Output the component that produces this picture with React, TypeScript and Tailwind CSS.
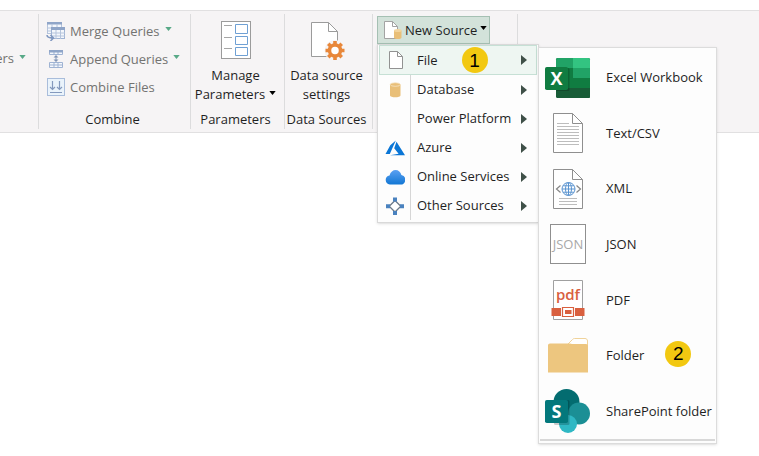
import type { ReactNode } from "react";

function Caret({ className }: { className: string }) {
  return (
    <svg viewBox="0 0 8 5" className={`h-[4px] w-[7px] shrink-0 ${className}`} aria-hidden="true">
      <path d="M0 0h8L4 5z" fill="currentColor" />
    </svg>
  );
}

function MergeIcon() {
  return (
    <svg width="20" height="20" viewBox="0 0 20 20" aria-hidden="true">
      <rect x="1.5" y="1.5" width="14" height="11" fill="#f4f7fc" stroke="#b5c4dc" />
      <path d="M1 1h15v2.500H1z" fill="#8fa5c8" />
      <path d="M6 3v10M11 3v4M2 7h5M2 10h5" stroke="#b5c4dc" />
      <rect x="5.500" y="7.500" width="13" height="10" fill="#f4f7fc" stroke="#9fb3d3" />
      <path d="M5 6h14v3H5z" fill="#8fa5c8" />
      <path d="M10 9v9M14.500 9v9M6 12h13M6 15h13" stroke="#b5c4dc" />
      <path d="M0 13h5v6H0z" fill="#f6f4f5" />
      <path d="M1 14c0 2.500 2 3 6 3M4.500 14l3 3-3 3" fill="none" stroke="#7f97c0" strokeWidth="1.500" />
    </svg>
  );
}

function AppendIcon() {
  return (
    <svg width="20" height="20" viewBox="0 0 20 20" aria-hidden="true">
      <path d="M3.500 1.500h13v4h-13zM8 3v3M12 3v3" fill="#f4f7fc" stroke="#9fb3d3" />
      <path d="M3 1h14v2.500H3z" fill="#8fa5c8" />
      <path d="M3.500 13.500h13v5h-13zM3.500 16h13M8 13.500v5M12 13.500v5" fill="#f4f7fc" stroke="#9fb3d3" />
      <path d="M10 7v5" stroke="#8095b8" />
      <path d="M7.500 8.500L10 6l2.500 2.500zM7.500 10.500L10 13l2.500-2.500z" fill="#8095b8" />
    </svg>
  );
}

function CombineIcon() {
  return (
    <svg width="20" height="20" viewBox="0 0 20 20" aria-hidden="true">
      <rect x="1.500" y="1.500" width="17" height="17" fill="#eaf3fb" stroke="#a9bddb" />
      <path d="M6.500 4v8M13.500 4v8M4 10l2.500 2.500L9 10M11 10l2.500 2.500L16 10M4 15.500h12" fill="none" stroke="#8499bd" strokeWidth="1.200" />
    </svg>
  );
}

function ParametersIcon() {
  return (
    <svg width="32" height="40" viewBox="0 0 32 40" aria-hidden="true">
      <rect x="1.500" y="1.500" width="29" height="37" fill="#fff" stroke="#9b9b9b" />
      <path d="M4 5.500h8M4 17.500h8M4 28.500h8" stroke="#a6a6a6" />
      <path d="M15.500 4.500h12v9h-12zM15.500 16.500h12v8h-12zM15.500 27.500h12v8h-12z" fill="#fff" stroke="#6fa0d4" />
    </svg>
  );
}

function GearPageIcon() {
  return (
    <svg width="36" height="40" viewBox="0 0 36 40" aria-hidden="true">
      <path d="M2.500 2.500h17l9 9v25h-26z" fill="#fff" stroke="#9b9b9b" />
      <path d="M19.500 2.500v9h9" fill="none" stroke="#9b9b9b" />
      <circle cx="26" cy="30.500" r="10.500" fill="#f6f4f5" />
      <circle cx="26" cy="30.500" r="5.500" fill="#fff" stroke="#e8873a" strokeWidth="3.500" />
      <path
        d="M26 21v3M26 37v3M16.500 30.500h3M32.500 30.500h3M19.300 23.800l2.100 2.100M30.600 35.100l2.100 2.100M19.300 37.200l2.100-2.100M30.600 25.900l2.100-2.100"
        stroke="#e8873a"
        strokeWidth="3.600"
      />
    </svg>
  );
}

function PageIcon() {
  return (
    <svg width="20" height="20" viewBox="0 0 20 20" aria-hidden="true">
      <path d="M3.500 1.500h8l5 5v12h-13z" fill="#fff" stroke="#929292" />
      <path d="M11.500 1.500v5h5" fill="none" stroke="#929292" />
    </svg>
  );
}

function NewSourceIcon() {
  return (
    <svg width="20" height="20" viewBox="0 0 20 20" aria-hidden="true">
      <path d="M2.500 1.500h8l5 5v12h-13z" fill="#fff" stroke="#a3a3a3" />
      <path d="M10.500 1.500v5h5" fill="none" stroke="#a3a3a3" />
      <path d="M12 10.500v7c0 2 7.500 2 7.500 0v-7z" fill="#e9bf78" />
      <ellipse cx="15.750" cy="10.500" rx="3.750" ry="1.500" fill="#f2d49d" />
    </svg>
  );
}

function DatabaseIcon() {
  return (
    <svg width="20" height="20" viewBox="0 0 20 20" aria-hidden="true">
      <path d="M5 4.500v11c0 2.400 10.500 2.400 10.500 0v-11z" fill="#e9bf78" />
      <ellipse cx="10.250" cy="4.500" rx="5" ry="1.800" fill="#e9bf78" stroke="#f8e6c8" strokeWidth=".8" />
    </svg>
  );
}

function AzureIcon() {
  return (
    <svg width="20" height="20" viewBox="0 0 20 20" aria-hidden="true">
      <path d="M10.800 2.500L5.300 7.300.5 16h4.300zM11.500 3.800L9.200 10.300l4.400 5.400L5 17.200h15z" fill="#0a76d6" />
    </svg>
  );
}

function CloudIcon() {
  return (
    <svg width="20" height="20" viewBox="0 0 20 20" aria-hidden="true">
      <defs>
        <linearGradient id="cloud" x1="0" y1="0" x2="0" y2="1">
          <stop offset="0" stopColor="#5aa0f2" />
          <stop offset="1" stopColor="#1277d4" />
        </linearGradient>
      </defs>
      <path d="M4.800 17.500a4.600 4.600 0 0 1-.3-9.100C5.500 5 8 3 10.500 3c3 0 5.200 2 5.900 5a4.800 4.800 0 0 1-.8 9.500z" fill="url(#cloud)" />
    </svg>
  );
}

function NodesIcon() {
  return (
    <svg width="20" height="20" viewBox="0 0 20 20" aria-hidden="true">
      <path d="M10 4.500l5.800 5.800L10 16l-5.800-5.700z" fill="#fff" stroke="#6c7a88" strokeWidth="1.300" />
      <path d="M8 1.500h4v4H8zM8 15h4v4H8zM1 8.300h4v4H1zM15 8.300h4v4h-4z" fill="#4a82bf" />
    </svg>
  );
}

function ExcelIcon() {
  return (
    <svg width="48" height="44" viewBox="0 0 48 44" aria-hidden="true">
      <rect x="12" y="2" width="34" height="40" rx="1.500" fill="#185c37" />
      <path d="M12 12h17v10H12z" fill="#21a366" />
      <path d="M13.500 2H29v10H12V3.500A1.500 1.500 0 0 1 13.500 2z" fill="#21a366" />
      <path d="M29 2h15.500A1.500 1.500 0 0 1 46 3.500V12H29z" fill="#33c481" />
      <path d="M29 12h17v10H29z" fill="#21a366" />
      <path d="M12 12h17v20H12z" fill="#107c41" />
      <path d="M29 22h17v10H29z" fill="#107c41" />
      <path d="M29 32h17v8.500a1.500 1.500 0 0 1-1.500 1.500H29z" fill="#185c37" />
      <rect x="12" y="12" width="13.500" height="23" rx="1.500" fill="#000" opacity=".2" />
      <rect x="1" y="11" width="23" height="23" rx="1.800" fill="#107c41" />
      <text x="12.500" y="29" textAnchor="middle" className="fill-white font-['Open_Sans',sans-serif] text-[18px] font-bold">X</text>
    </svg>
  );
}

function SheetOutline() {
  return (
    <>
      <path d="M9.500 2.500h19l10 10v29h-29z" fill="#fff" stroke="#8f8f8f" />
      <path d="M28.500 2.500v10h10" fill="none" stroke="#8f8f8f" />
    </>
  );
}

function TextIcon() {
  return (
    <svg width="48" height="44" viewBox="0 0 48 44" aria-hidden="true">
      <SheetOutline />
      <path d="M13 12.500h12M13 15.500h22M13 18.500h22M13 21.500h22M13 24.500h22M13 27.500h22M13 30.500h22M13 33.500h22" stroke="#bdbdbd" />
    </svg>
  );
}

function XmlIcon() {
  return (
    <svg width="48" height="44" viewBox="0 0 48 44" aria-hidden="true">
      <SheetOutline />
      <path d="M16.500 18.500l-4 3.500 4 3.500M32.500 18.500l4 3.500-4 3.500" fill="none" stroke="#858585" strokeWidth="1.200" />
      <g fill="#fff" stroke="#5b94d0">
        <circle cx="24.500" cy="22" r="6.500" />
        <ellipse cx="24.500" cy="22" rx="3" ry="6.500" />
        <path d="M24.500 15.500v13M18 22h13M19 18.800h11M19 25.200h11" />
      </g>
      <path d="M15 31.500h18M15 34.500h18M15 37.500h18" stroke="#bdbdbd" />
    </svg>
  );
}

function JsonIcon() {
  return (
    <svg width="48" height="44" viewBox="0 0 48 44" aria-hidden="true">
      <rect x="6.500" y="2.500" width="35" height="39" fill="#fff" stroke="#8f8f8f" />
      <text x="24" y="27" textAnchor="middle" className="fill-[#a8a8a8] font-['Liberation_Sans_Narrow','Open_Sans',sans-serif] text-[13px]">JSON</text>
    </svg>
  );
}

function PdfIcon() {
  return (
    <svg width="48" height="44" viewBox="0 0 48 44" aria-hidden="true">
      <path d="M9.500 2.500h29v39h-29z" fill="#fff" stroke="#a0a0a0" />
      <text x="24" y="22" textAnchor="middle" className="fill-[#d9603f] font-['Open_Sans',sans-serif] text-[15px] font-semibold">pdf</text>
      <path d="M7.500 30h33v8h-33z" fill="#d9603f" />
      <path d="M17 28.500h14v11H17z" fill="#fff" />
      <path d="M18.500 29.500h11v9h-11z" fill="#fff" stroke="#d9603f" strokeWidth="1.200" />
      <path d="M21 32h6.500v4H21z" fill="#d9603f" />
    </svg>
  );
}

function FolderIcon() {
  return (
    <svg width="48" height="44" viewBox="0 0 48 44" aria-hidden="true">
      <path d="M24 10l4.500-4.500c.6-.7 1.200-1 2-1H41c1.500 0 2.500 1 2.500 2.500V12" fill="#fff" stroke="#f0d39a" />
      <path d="M6 9.500h20l2 0.500h14c1.200 0 2 .8 2 2v26.500H4V11.500c0-1.200.8-2 2-2z" fill="#edc67f" />
    </svg>
  );
}

function SharePointIcon() {
  return (
    <svg width="48" height="44" viewBox="0 0 48 44" aria-hidden="true">
      <circle cx="22.500" cy="13" r="13" fill="#036c70" />
      <circle cx="35" cy="24.500" r="11" fill="#1b8f95" />
      <circle cx="24" cy="35" r="9" fill="#2fb8c4" />
      <rect x="10" y="11" width="15.500" height="25" rx="1.500" fill="#000" opacity=".2" />
      <rect x="1" y="11" width="23" height="23" rx="1.800" fill="#03787c" />
      <text x="12.500" y="29" textAnchor="middle" className="fill-white font-['Open_Sans',sans-serif] text-[18px] font-bold">S</text>
    </svg>
  );
}

function Group({ label, className, children }: { label: string; className: string; children: ReactNode }) {
  return (
    <section aria-label={label} className={`flex shrink-0 flex-col justify-between border-r border-[#dcdcdd] pr-[4px] pb-[2px] ${className}`}>
      {children}
      <div className="text-center leading-4 whitespace-nowrap">{label}</div>
    </section>
  );
}

const queryActions = [
  { label: "Merge Queries", icon: <MergeIcon />, caret: true },
  { label: "Append Queries", icon: <AppendIcon />, caret: true },
  { label: "Combine Files", icon: <CombineIcon />, caret: false },
];

const sources = [
  { label: "File", icon: <PageIcon />, badge: "1" },
  { label: "Database", icon: <DatabaseIcon /> },
  { label: "Power Platform", icon: null },
  { label: "Azure", icon: <AzureIcon /> },
  { label: "Online Services", icon: <CloudIcon /> },
  { label: "Other Sources", icon: <NodesIcon /> },
];

const files = [
  { label: "Excel Workbook", icon: <ExcelIcon /> },
  { label: "Text/CSV", icon: <TextIcon /> },
  { label: "XML", icon: <XmlIcon /> },
  { label: "JSON", icon: <JsonIcon /> },
  { label: "PDF", icon: <PdfIcon /> },
  { label: "Folder", icon: <FolderIcon />, badge: "2" },
  { label: "SharePoint folder", icon: <SharePointIcon /> },
];

function Badge({ children }: { children: ReactNode }) {
  return (
    <span className="flex size-[26px] items-center justify-center rounded-full bg-[#f2c811] font-['Liberation_Sans',Arial,sans-serif] text-[19px] leading-none text-black">
      {children}
    </span>
  );
}

function FileMenu() {
  return (
    <div role="menu" aria-label="File" className="absolute top-[2px] left-full w-[179px] border border-[#dcdcdc] bg-[#fdfdfd] px-px pt-[2px] pb-[2px] shadow-sm">
      <div className="grid h-[391px] grid-rows-7 border-b-2 border-[#d8d8d8]">
        {files.map((file) => (
          <button key={file.label} type="button" role="menuitem" className="flex items-center pl-[4px] text-left">
            {file.icon}
            <span className="ml-[14px] whitespace-nowrap">{file.label}</span>
            {file.badge && <span className="-mt-1 ml-[21px]"><Badge>{file.badge}</Badge></span>}
          </button>
        ))}
      </div>
    </div>
  );
}

function SourceMenu() {
  return (
    <div role="menu" aria-label="New Source" className="absolute top-full left-0 z-10 w-[162px] border border-[#d9d9d9] bg-[#fdfdfd] px-px pb-[2px] shadow-sm">
      {sources.map((source) => (
        <button
          key={source.label}
          type="button"
          role="menuitem"
          className={
            source.badge
              ? "flex h-[30px] w-full items-center border border-[#c6e0d5] bg-[#eef6f2] text-left"
              : "flex h-[29px] w-full items-center border-x border-transparent text-left"
          }
        >
          <span className={source.badge ? "flex w-[31px] justify-center" : "flex h-full w-[31px] items-center justify-center border-r border-[#d6d6d6]"}>
            {source.icon}
          </span>
          <span className="ml-[6px] whitespace-nowrap">{source.label}</span>
          {source.badge && <span className="ml-[24px]"><Badge>{source.badge}</Badge></span>}
          <svg viewBox="0 0 6 10" className="mr-[9px] ml-auto h-[10px] w-[6px] text-[#3f5048]" aria-hidden="true">
            <path d="M0 0l6 5-6 5z" fill="currentColor" />
          </svg>
        </button>
      ))}
      <FileMenu />
    </div>
  );
}

export default function App() {
  return (
    <main className="min-h-screen bg-white pt-[10px] font-['Open_Sans','Noto_Sans',sans-serif] text-[13px] leading-[19px] text-[#1f1f1f]">
      <header className="flex h-[123px] border-y border-[#e1e0e1] bg-[#f6f4f5] py-[3px]">
        <div className="flex w-[39px] shrink-0 items-start justify-end overflow-hidden border-r border-[#dcdcdd] pt-[35px] pr-[12px] text-[#737371]">
          <button type="button" className="flex items-center gap-[5px]">
            ers
            <Caret className="mb-[4px] text-[#58a987]" />
          </button>
        </div>
        <Group label="Combine" className="w-[152px]">
          <div className="flex flex-col items-start pt-[3px] pl-[7px] text-[#737371]">
            {queryActions.map((action) => (
              <button key={action.label} type="button" className="flex h-[28px] items-center">
                {action.icon}
                <span className="ml-[4px]">{action.label}</span>
                {action.caret && <Caret className="mb-[4px] ml-[5px] text-[#58a987]" />}
              </button>
            ))}
          </div>
        </Group>
        <Group label="Parameters" className="w-[94px]">
          <button type="button" className="flex flex-col items-center pt-[6px]">
            <ParametersIcon />
            <span className="mt-[6px]">Manage</span>
            <span className="flex items-center gap-[4px]">
              Parameters
              <Caret className="mb-[4px] text-black" />
            </span>
          </button>
        </Group>
        <Group label="Data Sources" className="w-[88px]">
          <button type="button" className="flex flex-col items-center pt-[6px]">
            <GearPageIcon />
            <span className="mt-[6px] whitespace-nowrap">Data source</span>
            <span>settings</span>
          </button>
        </Group>
        <section aria-label="New Query" className="w-[145px] shrink-0 border-r border-[#dcdcdd] pt-[2px] pl-[4px]">
          <div className="relative inline-block">
            <button type="button" aria-haspopup="menu" aria-expanded="true" className="flex h-[28px] w-[113px] items-center border border-[#a5c0b3] bg-[#d3e2da] pl-[4px]">
              <NewSourceIcon />
              <span className="ml-[3px] whitespace-nowrap">New Source</span>
              <Caret className="mb-[4px] ml-[3px] text-black" />
            </button>
            <SourceMenu />
          </div>
        </section>
      </header>
    </main>
  );
}
